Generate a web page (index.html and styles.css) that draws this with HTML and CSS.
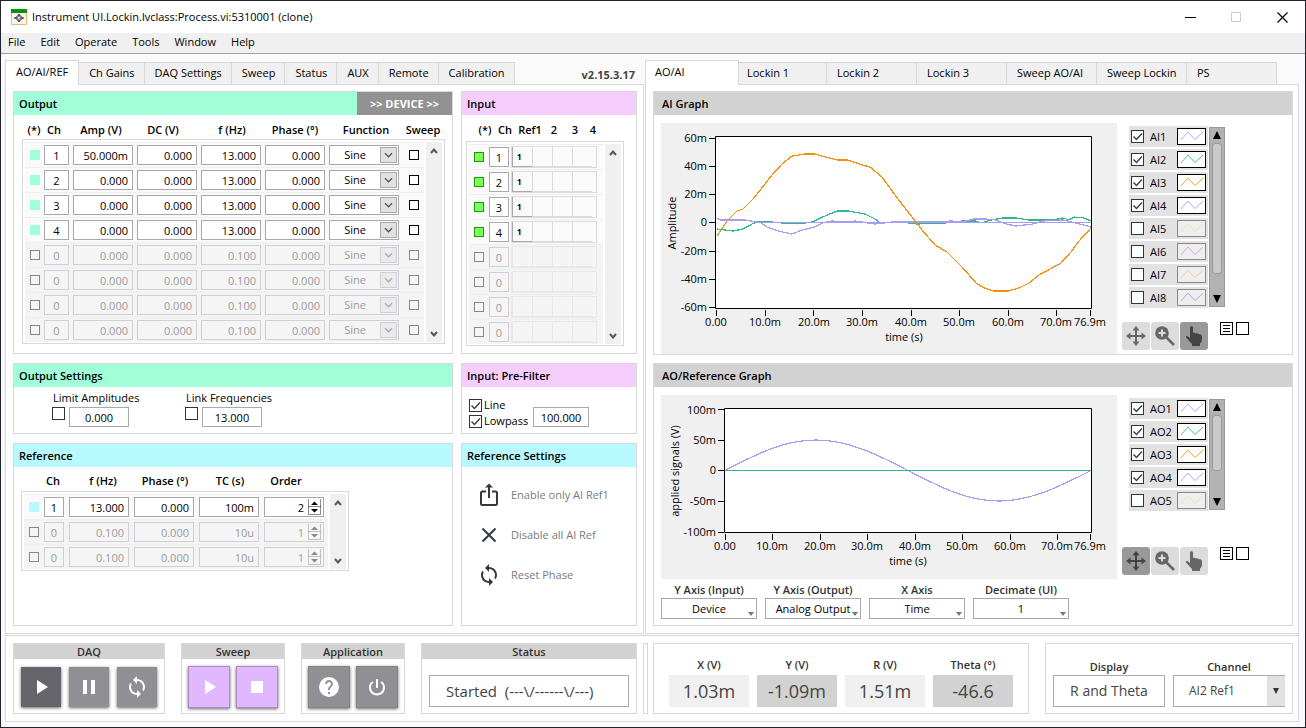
FILE: index.html
```html
<!DOCTYPE html>
<html lang="en">
<head>
<meta charset="utf-8">
<title>Instrument UI.Lockin.lvclass:Process.vi:5310001 (clone)</title>
<link rel="stylesheet" href="styles.css">
</head>
<body>
<svg class="defs" aria-hidden="true">
  <symbol id="chev-up" viewBox="0 0 8 8"><path d="M1 6 4 2.600 7 6" fill="none" stroke="currentColor" stroke-width="2"/></symbol>
  <symbol id="chev-down" viewBox="0 0 8 8"><path d="M1 2 4 5.400 7 2" fill="none" stroke="currentColor" stroke-width="2"/></symbol>
  <symbol id="chev-thin" viewBox="0 0 10 8"><path d="M1 1.500 5 5.500 9 1.500" fill="none" stroke="currentColor" stroke-width="1.500"/></symbol>
  <symbol id="tri-up" viewBox="0 0 8 8"><path d="M0 8 4 0 8 8Z" fill="currentColor"/></symbol>
  <symbol id="tri-down" viewBox="0 0 8 8"><path d="M0 0 4 8 8 0Z" fill="currentColor"/></symbol>
  <symbol id="spin" viewBox="0 0 13 16"><path d="M.5 0v15.500h12V0M0 7.500h13" fill="none" stroke="currentColor" opacity=".45"/><path d="M3 6 6.500 2.500 10 6ZM3 10 6.500 13.500 10 10Z" fill="currentColor"/></symbol>
  <symbol id="sync" viewBox="0 0 24 24"><path fill="currentColor" d="M12 4V1L8 5l4 4V6c3.310 0 6 2.690 6 6 0 1.010-.25 1.970-.7 2.800l1.460 1.460A7.930 7.930 0 0 0 20 12c0-4.420-3.580-8-8-8zm0 14c-3.310 0-6-2.690-6-6 0-1.010.25-1.970.7-2.800L5.240 7.740A7.930 7.930 0 0 0 4 12c0 4.420 3.580 8 8 8v3l4-4-4-4v3z"/></symbol>
  <symbol id="wave" viewBox="0 0 29 17"><path d="M2.500 12.500 10.500 3.500 18.500 12 27.500 3.500" fill="none" stroke="currentColor"/></symbol>
  <symbol id="move" viewBox="0 0 20 20"><path d="M10 2v16M2 10h16" stroke="currentColor" stroke-width="2"/><path d="M10 0 13.500 4.500h-7ZM10 20l3.500-4.500h-7ZM0 10l4.500-3.500v7ZM20 10l-4.500-3.500v7Z" fill="currentColor"/></symbol>
  <symbol id="zoomer" viewBox="0 0 20 20"><path d="M11.500 11.500 19 19" stroke="currentColor" stroke-width="2.500"/><circle cx="7" cy="7" r="6.800" fill="currentColor"/><path d="M7 3.500v7M3.500 7h7" stroke="#dcdcdc" stroke-width="2"/></symbol>
  <symbol id="hand" viewBox="0 0 18 20"><path fill="currentColor" d="M5 1.500Q5 0 6.500 0T8 1.500V7l1.500-.5 1.500 1 1.500-.3 1.500 1 1.500 0q1.500.8 1.500 2.300V14q0 2-2 3.500V20H7v-2L1 11.500Q.5 10 2 9.800L5 12Z"/></symbol>
</svg>

<div class="window">
  <header class="titlebar">
    <svg class="app-icon" viewBox="0 0 16 16"><path fill="#f4f4f4" stroke="#f0b860" d="M.5.5h15v15H.5z"/><path fill="#0b910b" d="M0 0h16v4H0z"/><path d="M3 9h10M8 5v8M4.500 9 8 5.500 11.500 9 8 12.500Z" fill="none" stroke="#222"/><circle cx="8" cy="9" r="1" fill="#f4f4f4"/></svg>
    <h1>Instrument UI.Lockin.lvclass:Process.vi:5310001 (clone)</h1>
    <button class="win-btn" aria-label="Minimize"><svg viewBox="0 0 11 11"><path d="M0 5.500h11" stroke="#000"/></svg></button>
    <button class="win-btn" aria-label="Maximize" disabled><svg viewBox="0 0 11 11"><path d="M.5.5h9v9h-9z" fill="none" stroke="#ccc"/></svg></button>
    <button class="win-btn" aria-label="Close"><svg viewBox="0 0 11 11"><path d="M.5.5l10 10M10.500.5l-10 10" stroke="#000" stroke-width="1.200"/></svg></button>
  </header>
  <nav class="menubar">
    <button>File</button><button>Edit</button><button>Operate</button><button>Tools</button><button>Window</button><button>Help</button>
  </nav>

  <main class="content">
    <div class="panes">
      <section class="pane">
        <div class="tabs">
          <button class="tab active">AO/AI/REF</button><button class="tab">Ch Gains</button><button class="tab">DAQ Settings</button><button class="tab">Sweep</button><button class="tab">Status</button><button class="tab">AUX</button><button class="tab">Remote</button><button class="tab">Calibration</button>
          <span class="version">v2.15.3.17</span>
        </div>
        <div class="panel left-grid">
          <section class="card">
            <div class="card-head mint"><h2>Output</h2><button class="device">&gt;&gt; DEVICE &gt;&gt;</button></div>
            <div class="list output-list">
              <table>
                <thead><tr><th>(*)</th><th>Ch</th><th>Amp (V)</th><th>DC (V)</th><th>f (Hz)</th><th>Phase (°)</th><th>Function</th><th>Sweep</th></tr></thead>
                <tbody>
                  <tr><td><input type="checkbox" class="led" aria-label="Active" checked></td><td><input class="mid" aria-label="Channel" value="1"></td><td><input aria-label="Amplitude" value="50.000m"></td><td><input aria-label="DC" value="0.000"></td><td><input aria-label="Frequency" value="13.000"></td><td><input aria-label="Phase" value="0.000"></td><td><span class="drop"><select aria-label="Function"><option>Sine</option></select><svg><use href="#chev-thin"/></svg></span></td><td><input type="checkbox" aria-label="Sweep"></td></tr>
                  <tr><td><input type="checkbox" class="led" aria-label="Active" checked></td><td><input class="mid" aria-label="Channel" value="2"></td><td><input aria-label="Amplitude" value="0.000"></td><td><input aria-label="DC" value="0.000"></td><td><input aria-label="Frequency" value="13.000"></td><td><input aria-label="Phase" value="0.000"></td><td><span class="drop"><select aria-label="Function"><option>Sine</option></select><svg><use href="#chev-thin"/></svg></span></td><td><input type="checkbox" aria-label="Sweep"></td></tr>
                  <tr><td><input type="checkbox" class="led" aria-label="Active" checked></td><td><input class="mid" aria-label="Channel" value="3"></td><td><input aria-label="Amplitude" value="0.000"></td><td><input aria-label="DC" value="0.000"></td><td><input aria-label="Frequency" value="13.000"></td><td><input aria-label="Phase" value="0.000"></td><td><span class="drop"><select aria-label="Function"><option>Sine</option></select><svg><use href="#chev-thin"/></svg></span></td><td><input type="checkbox" aria-label="Sweep"></td></tr>
                  <tr><td><input type="checkbox" class="led" aria-label="Active" checked></td><td><input class="mid" aria-label="Channel" value="4"></td><td><input aria-label="Amplitude" value="0.000"></td><td><input aria-label="DC" value="0.000"></td><td><input aria-label="Frequency" value="13.000"></td><td><input aria-label="Phase" value="0.000"></td><td><span class="drop"><select aria-label="Function"><option>Sine</option></select><svg><use href="#chev-thin"/></svg></span></td><td><input type="checkbox" aria-label="Sweep"></td></tr>
                  <tr class="off"><td><input type="checkbox" aria-label="Active" disabled></td><td><input class="mid" aria-label="Channel" value="0" disabled></td><td><input aria-label="Amplitude" value="0.000" disabled></td><td><input aria-label="DC" value="0.000" disabled></td><td><input aria-label="Frequency" value="0.100" disabled></td><td><input aria-label="Phase" value="0.000" disabled></td><td><span class="drop"><select aria-label="Function" disabled><option>Sine</option></select><svg><use href="#chev-thin"/></svg></span></td><td><input type="checkbox" aria-label="Sweep" disabled></td></tr>
                  <tr class="off"><td><input type="checkbox" aria-label="Active" disabled></td><td><input class="mid" aria-label="Channel" value="0" disabled></td><td><input aria-label="Amplitude" value="0.000" disabled></td><td><input aria-label="DC" value="0.000" disabled></td><td><input aria-label="Frequency" value="0.100" disabled></td><td><input aria-label="Phase" value="0.000" disabled></td><td><span class="drop"><select aria-label="Function" disabled><option>Sine</option></select><svg><use href="#chev-thin"/></svg></span></td><td><input type="checkbox" aria-label="Sweep" disabled></td></tr>
                  <tr class="off"><td><input type="checkbox" aria-label="Active" disabled></td><td><input class="mid" aria-label="Channel" value="0" disabled></td><td><input aria-label="Amplitude" value="0.000" disabled></td><td><input aria-label="DC" value="0.000" disabled></td><td><input aria-label="Frequency" value="0.100" disabled></td><td><input aria-label="Phase" value="0.000" disabled></td><td><span class="drop"><select aria-label="Function" disabled><option>Sine</option></select><svg><use href="#chev-thin"/></svg></span></td><td><input type="checkbox" aria-label="Sweep" disabled></td></tr>
                  <tr class="off"><td><input type="checkbox" aria-label="Active" disabled></td><td><input class="mid" aria-label="Channel" value="0" disabled></td><td><input aria-label="Amplitude" value="0.000" disabled></td><td><input aria-label="DC" value="0.000" disabled></td><td><input aria-label="Frequency" value="0.100" disabled></td><td><input aria-label="Phase" value="0.000" disabled></td><td><span class="drop"><select aria-label="Function" disabled><option>Sine</option></select><svg><use href="#chev-thin"/></svg></span></td><td><input type="checkbox" aria-label="Sweep" disabled></td></tr>
                </tbody>
              </table>
              <div class="scroll"><svg><use href="#chev-up"/></svg><svg><use href="#chev-down"/></svg></div>
            </div>
          </section>

          <section class="card">
            <div class="card-head pink"><h2>Input</h2></div>
            <div class="list input-list">
              <table>
                <thead><tr><th>(*)</th><th>Ch</th><th>Ref1</th><th>2</th><th>3</th><th>4</th></tr></thead>
                <tbody>
                  <tr><td><input type="checkbox" class="green" aria-label="Active" checked></td><td><input class="mid" aria-label="Channel" value="1"></td><td class="refs"><b>1</b><i></i><i></i><i></i></td></tr>
                  <tr><td><input type="checkbox" class="green" aria-label="Active" checked></td><td><input class="mid" aria-label="Channel" value="2"></td><td class="refs"><b>1</b><i></i><i></i><i></i></td></tr>
                  <tr><td><input type="checkbox" class="green" aria-label="Active" checked></td><td><input class="mid" aria-label="Channel" value="3"></td><td class="refs"><b>1</b><i></i><i></i><i></i></td></tr>
                  <tr><td><input type="checkbox" class="green" aria-label="Active" checked></td><td><input class="mid" aria-label="Channel" value="4"></td><td class="refs"><b>1</b><i></i><i></i><i></i></td></tr>
                  <tr class="off"><td><input type="checkbox" aria-label="Active" disabled></td><td><input class="mid" aria-label="Channel" value="0" disabled></td><td class="refs"><i></i><i></i><i></i><i></i></td></tr>
                  <tr class="off"><td><input type="checkbox" aria-label="Active" disabled></td><td><input class="mid" aria-label="Channel" value="0" disabled></td><td class="refs"><i></i><i></i><i></i><i></i></td></tr>
                  <tr class="off"><td><input type="checkbox" aria-label="Active" disabled></td><td><input class="mid" aria-label="Channel" value="0" disabled></td><td class="refs"><i></i><i></i><i></i><i></i></td></tr>
                  <tr class="off"><td><input type="checkbox" aria-label="Active" disabled></td><td><input class="mid" aria-label="Channel" value="0" disabled></td><td class="refs"><i></i><i></i><i></i><i></i></td></tr>
                </tbody>
              </table>
              <div class="scroll"><svg><use href="#chev-up"/></svg><svg><use href="#chev-down"/></svg></div>
            </div>
          </section>

          <section class="card">
            <div class="card-head mint"><h2>Output Settings</h2></div>
            <div class="limits">
              <div class="limit"><label for="limit-amp">Limit Amplitudes</label><div><input type="checkbox" class="big" id="limit-amp"><input class="mid" aria-label="Amplitude limit" value="0.000"></div></div>
              <div class="limit"><label for="link-freq">Link Frequencies</label><div><input type="checkbox" class="big" id="link-freq"><input class="mid" aria-label="Linked frequency" value="13.000"></div></div>
            </div>
          </section>

          <section class="card">
            <div class="card-head pink"><h2>Input: Pre-Filter</h2></div>
            <div class="filter">
              <div><label><input type="checkbox" class="big" checked>Line</label><label><input type="checkbox" class="big" checked>Lowpass</label></div>
              <input class="mid" aria-label="Lowpass frequency" value="100.000">
            </div>
          </section>

          <section class="card">
            <div class="card-head cyan"><h2>Reference</h2></div>
            <div class="list ref-list">
              <table>
                <thead><tr><th></th><th>Ch</th><th>f (Hz)</th><th>Phase (°)</th><th>TC (s)</th><th>Order</th></tr></thead>
                <tbody>
                  <tr><td><input type="checkbox" class="led" aria-label="Active" checked></td><td><input class="mid" aria-label="Channel" value="1"></td><td><input aria-label="Frequency" value="13.000"></td><td><input aria-label="Phase" value="0.000"></td><td><input aria-label="Time constant" value="100m"></td><td><span class="spinner"><input aria-label="Order" value="2"><svg><use href="#spin"/></svg></span></td></tr>
                  <tr class="off"><td><input type="checkbox" aria-label="Active" disabled></td><td><input class="mid" aria-label="Channel" value="0" disabled></td><td><input aria-label="Frequency" value="0.100" disabled></td><td><input aria-label="Phase" value="0.000" disabled></td><td><input aria-label="Time constant" value="10u" disabled></td><td><span class="spinner"><input aria-label="Order" value="1" disabled><svg><use href="#spin"/></svg></span></td></tr>
                  <tr class="off"><td><input type="checkbox" aria-label="Active" disabled></td><td><input class="mid" aria-label="Channel" value="0" disabled></td><td><input aria-label="Frequency" value="0.100" disabled></td><td><input aria-label="Phase" value="0.000" disabled></td><td><input aria-label="Time constant" value="10u" disabled></td><td><span class="spinner"><input aria-label="Order" value="1" disabled><svg><use href="#spin"/></svg></span></td></tr>
                </tbody>
              </table>
              <div class="scroll"><svg><use href="#chev-up"/></svg><svg><use href="#chev-down"/></svg></div>
            </div>
          </section>

          <section class="card">
            <div class="card-head cyan"><h2>Reference Settings</h2></div>
            <div class="actions">
              <button><svg viewBox="0 0 24 24"><path d="M9 8.500H5.500Q4 8.500 4 10V20.500Q4 22 5.500 22h13Q20 22 20 20.500V10q0-1.500-1.500-1.500H15" fill="none" stroke="currentColor" stroke-width="2"/><path d="M12 15V3" stroke="currentColor" stroke-width="2"/><path d="M8 4.500 12 .5l4 4Z" fill="currentColor"/></svg>Enable only AI Ref1</button>
              <button><svg viewBox="0 0 24 24"><path d="M5.500 5.500l13 13M18.500 5.500l-13 13" stroke="currentColor" stroke-width="2"/></svg>Disable all AI Ref</button>
              <button><svg viewBox="0 0 24 24"><use href="#sync"/></svg>Reset Phase</button>
            </div>
          </section>
        </div>
      </section>

      <section class="pane">
        <div class="tabs wide">
          <button class="tab active">AO/AI</button><button class="tab">Lockin 1</button><button class="tab">Lockin 2</button><button class="tab">Lockin 3</button><button class="tab">Sweep AO/AI</button><button class="tab">Sweep Lockin</button><button class="tab">PS</button>
        </div>
        <div class="panel right-grid">
          <section class="card">
            <div class="card-head gray"><h2>AI Graph</h2></div>
            <div class="graph-row">
              <svg class="graph" viewBox="0 0 456 231" role="img" aria-label="AI Graph">
                <path class="frame" d="M54.500 13.500h376v172h-376z"/>
                <path class="axis" d="M48 15.500h6M48 43.500h6M48 71.500h6M48 99.500h6M48 128.500h6M48 156.500h6M48 184.500h6M55.500 187v6M104.500 187v6M152.500 187v6M201.500 187v6M250.500 187v6M298.500 187v6M347.500 187v6M395.500 187v6M429.500 187v6"/>
                <g class="end"><text x="46" y="19">60m</text><text x="46" y="47">40m</text><text x="46" y="75">20m</text><text x="46" y="103">0</text><text x="46" y="132">-20m</text><text x="46" y="160">-40m</text><text x="46" y="188">-60m</text></g>
                <g class="mid-text"><text x="55" y="203">0.00</text><text x="104" y="203">10.0m</text><text x="153" y="203">20.0m</text><text x="201" y="203">30.0m</text><text x="250" y="203">40.0m</text><text x="298" y="203">50.0m</text><text x="347" y="203">60.0m</text><text x="395" y="203">70.0m</text><text x="429" y="203">76.9m</text><text x="243" y="218">time (s)</text><text transform="translate(15 100) rotate(-90)">Amplitude</text></g>
                <g class="trace">
                  <path stroke="#2eb889" d="M56 106 72 108 82 106 91 101 97 99H111L121 100H144L151 99 164 93 176 88H187L204 91 214 96 219 100 240 99 256 101 284 100 301 98 315 98 320 100 330 97 342 95H355L368 97H392L402 95 408 97 413 94 423 95 430 98"/>
                  <path stroke="#a89cf5" d="M56 95 59 97H84L99 99.500H430M99 99 106 104 117 108 131 111 141 107 154 104 161 100 171 98 184 99 194 98 214 101 231 99 270 99 291 98 301 99 313 96 325 96 335 97 345 101 355 103 372 101 382 98 402 97 415 100 430 104"/>
                  <path stroke="#f88c0c" d="M56 113 66 98 76 88 82 86 92 76 104 61 111 52 121 41 131 33 144 31H154L164 34 177 37H187L201 42 209 44 221 54 237 76 251 94 261 107 274 122 286 129 301 144 315 160 323 165 333 168H347L358 165 368 160 378 152 400 140 410 129 418 118 430 105"/>
                </g>
              </svg>
              <div class="side">
                <div class="legend">
                  <div class="series">
                    <label class="s1"><input type="checkbox" class="big" checked>AI1<svg><use href="#wave"/></svg></label>
                    <label class="s2"><input type="checkbox" class="big" checked>AI2<svg><use href="#wave"/></svg></label>
                    <label class="s3"><input type="checkbox" class="big" checked>AI3<svg><use href="#wave"/></svg></label>
                    <label class="s1"><input type="checkbox" class="big" checked>AI4<svg><use href="#wave"/></svg></label>
                    <label class="s5 dim"><input type="checkbox" class="big">AI5<svg><use href="#wave"/></svg></label>
                    <label class="s6 dim"><input type="checkbox" class="big">AI6<svg><use href="#wave"/></svg></label>
                    <label class="s7 dim"><input type="checkbox" class="big">AI7<svg><use href="#wave"/></svg></label>
                    <label class="s8 dim"><input type="checkbox" class="big">AI8<svg><use href="#wave"/></svg></label>
                  </div>
                  <div class="bar"><svg><use href="#tri-up"/></svg><span class="thumb thumb-long"></span><svg><use href="#tri-down"/></svg></div>
                </div>
                <div class="tools">
                  <button class="tool" aria-label="Pan"><svg><use href="#move"/></svg></button><button class="tool" aria-label="Zoom"><svg><use href="#zoomer"/></svg></button><button class="tool on" aria-label="Select"><svg><use href="#hand"/></svg></button>
                  <button class="mini" aria-label="List"><svg viewBox="0 0 11 11"><path d="M2 2.500h7M2 5.500h7M2 8.500h7" stroke="#000"/></svg></button><button class="mini" aria-label="Blank"></button>
                </div>
              </div>
            </div>
          </section>

          <section class="card">
            <div class="card-head gray"><h2>AO/Reference Graph</h2></div>
            <div class="graph-row">
              <svg class="graph" viewBox="0 0 456 184" role="img" aria-label="AO/Reference Graph">
                <path class="frame" d="M63.500 13.500h367v124h-367z"/>
                <path class="axis" d="M57 14.500h6M57 45.500h6M57 75.500h6M57 106.500h6M57 137.500h6M64.500 139v6M111.500 139v6M159.500 139v6M206.500 139v6M254.500 139v6M301.500 139v6M349.500 139v6M396.500 139v6M429.500 139v6"/>
                <g class="end"><text x="55" y="19">100m</text><text x="55" y="49">50m</text><text x="55" y="79">0</text><text x="55" y="110">-50m</text><text x="55" y="141">-100m</text></g>
                <g class="mid-text"><text x="64" y="155">0.00</text><text x="111" y="155">10.0m</text><text x="159" y="155">20.0m</text><text x="206" y="155">30.0m</text><text x="254" y="155">40.0m</text><text x="301" y="155">50.0m</text><text x="349" y="155">60.0m</text><text x="396" y="155">70.0m</text><text x="429" y="155">76.9m</text><text x="247" y="170">time (s)</text><text transform="translate(18 76) rotate(-90)">applied signals (V)</text></g>
                <g class="trace">
                  <path stroke="#a89cf5" d="M64 75.500C94 60 122 45 155 45S217 60 247 75.500 305 106 338 106 399 91 430 75.500"/>
                  <path stroke="#2eb889" d="M64 75.500H430"/>
                </g>
              </svg>
              <div class="side">
                <div class="legend">
                  <div class="series">
                    <label class="s1"><input type="checkbox" class="big" checked>AO1<svg><use href="#wave"/></svg></label>
                    <label class="s2"><input type="checkbox" class="big" checked>AO2<svg><use href="#wave"/></svg></label>
                    <label class="s3"><input type="checkbox" class="big" checked>AO3<svg><use href="#wave"/></svg></label>
                    <label class="s1"><input type="checkbox" class="big" checked>AO4<svg><use href="#wave"/></svg></label>
                    <label class="s5 dim"><input type="checkbox" class="big">AO5<svg><use href="#wave"/></svg></label>
                  </div>
                  <div class="bar"><svg><use href="#tri-up"/></svg><span class="thumb thumb-short"></span><svg><use href="#tri-down"/></svg></div>
                </div>
                <div class="tools">
                  <button class="tool on" aria-label="Pan"><svg><use href="#move"/></svg></button><button class="tool" aria-label="Zoom"><svg><use href="#zoomer"/></svg></button><button class="tool" aria-label="Select"><svg><use href="#hand"/></svg></button>
                  <button class="mini" aria-label="List"><svg viewBox="0 0 11 11"><path d="M2 2.500h7M2 5.500h7M2 8.500h7" stroke="#000"/></svg></button><button class="mini" aria-label="Blank"></button>
                </div>
              </div>
            </div>
            <div class="axes">
              <label>Y Axis (Input)<span class="ring"><select><option>Device</option></select><svg viewBox="0 0 6 4"><path d="M0 0h6L3 4Z"/></svg></span></label>
              <label>Y Axis (Output)<span class="ring"><select><option>Analog Output</option></select><svg viewBox="0 0 6 4"><path d="M0 0h6L3 4Z"/></svg></span></label>
              <label>X Axis<span class="ring"><select><option>Time</option></select><svg viewBox="0 0 6 4"><path d="M0 0h6L3 4Z"/></svg></span></label>
              <label>Decimate (UI)<span class="ring"><select><option>1</option></select><svg viewBox="0 0 6 4"><path d="M0 0h6L3 4Z"/></svg></span></label>
            </div>
          </section>
        </div>
      </section>
    </div>

    <footer class="panel footer">
      <div class="foot-left">
        <section class="group"><h3>DAQ</h3><div class="keys loose">
          <button class="key dark" aria-label="Run"><svg viewBox="0 0 24 24"><path d="M8 5v14l11-7z"/></svg></button>
          <button class="key" aria-label="Pause"><svg viewBox="0 0 24 24"><path d="M6 5h4v14H6zM14 5h4v14h-4z"/></svg></button>
          <button class="key" aria-label="Restart"><svg viewBox="0 0 24 24"><use href="#sync"/></svg></button>
        </div></section>
        <section class="group"><h3>Sweep</h3><div class="keys">
          <button class="key lilac" aria-label="Start sweep"><svg viewBox="0 0 24 24"><path d="M8 5v14l11-7z"/></svg></button>
          <button class="key lilac" aria-label="Stop sweep"><svg viewBox="0 0 24 24"><path d="M6 6h12v12H6z"/></svg></button>
        </div></section>
        <section class="group"><h3>Application</h3><div class="keys">
          <button class="key framed" aria-label="Help"><svg viewBox="0 0 24 24"><path d="M12 2a10 10 0 1 0 0 20 10 10 0 0 0 0-20zm1 17h-2v-2h2v2zm2.070-7.750-.9.920C13.450 12.900 13 13.500 13 15h-2v-.5c0-1.100.45-2.100 1.170-2.830l1.240-1.260c.37-.36.59-.86.59-1.410 0-1.100-.9-2-2-2s-2 .9-2 2H8c0-2.210 1.790-4 4-4s4 1.790 4 4c0 .88-.36 1.680-.93 2.250z"/></svg></button>
          <button class="key framed" aria-label="Power"><svg viewBox="0 0 24 24"><path d="M13 4h-2v9h2V4zm3.800 2.200-1.300 1.300A5.900 5.900 0 0 1 18 12.500a6 6 0 1 1-9.500-5L7.200 6.200A8 8 0 1 0 20 12.500a7.900 7.900 0 0 0-3.200-6.300z"/></svg></button>
        </div></section>
        <section class="group status"><h3>Status</h3><output>Started&nbsp; (---\/------\/---)</output></section>
      </div>
      <div class="split"></div>
      <section class="group readouts">
        <div><h3>X (V)</h3><output>1.03m</output></div>
        <div><h3>Y (V)</h3><output class="shade">-1.09m</output></div>
        <div><h3>R (V)</h3><output>1.51m</output></div>
        <div><h3>Theta (°)</h3><output class="shade">-46.6</output></div>
      </section>
      <section class="group display">
        <div><h3>Display</h3><button class="mode">R and Theta</button></div>
        <label>Channel<span class="combo"><select><option>AI2 Ref1</option></select><svg><use href="#tri-down"/></svg></span></label>
      </section>
    </footer>
  </main>
</div>
</body>
</html>
```
FILE: styles.css
```css
* { box-sizing: border-box; }
body, h1, h2, h3 { margin: 0; }
body, button, input, select {
  font: 11px/14px "Open Sans", "Noto Sans", sans-serif;
  color: #000;
}
h1 { font-size: 11px; font-weight: 400; }
h2, h3 { font-size: 11px; font-weight: 600; }
button { padding: 0; border: 0; background: none; }
svg { display: block; }
.defs { display: none; }

.window {
  display: flex;
  flex-direction: column;
  min-height: 100vh;
  border: 1px solid #1f2430;
  background: #fafafa;
}
.titlebar {
  display: flex;
  align-items: center;
  height: 32px;
  padding-left: 10px;
  background: #fff;
}
.titlebar h1 { flex: 1; padding-left: 5px; }
.app-icon { width: 16px; height: 16px; }
.win-btn { display: grid; place-items: center; width: 46px; height: 30px; }
.win-btn svg { width: 11px; height: 11px; }
.menubar {
  display: flex;
  gap: 15px;
  height: 21px;
  padding: 0 7px 3px;
  background: #f0f0f0;
  border-bottom: 1px solid #a0a0a0;
}

.content {
  flex: 1;
  display: flex;
  flex-direction: column;
  gap: 1px;
  padding: 6px 6px 5px 4px;
}
.panes { flex: 1; display: grid; grid-template-columns: 639px 1fr; gap: 1px; }
.pane { display: flex; flex-direction: column; min-width: 0; }
.panel { border: 1px solid #d8d8d8; background: #fff; }
.tabs { display: flex; align-items: flex-end; height: 24px; }
.tab {
  height: 22px;
  padding: 0 9px 2px 10px;
  border: solid #d8d8d8;
  border-width: 1px 1px 0 0;
  background: #f0f0f0;
  white-space: nowrap;
}
.tab.active {
  height: 25px;
  margin-bottom: -1px;
  padding-right: 10px;
  padding-bottom: 3px;
  border-left-width: 1px;
  background: #fff;
  z-index: 1;
}
.version { flex: 1; padding: 0 9px 2px 0; text-align: right; font-weight: 700; color: #444; }
.wide .tab { width: 90px; text-align: left; }
.wide .active { width: 94px; margin-right: -2px; padding-left: 9px; }

.left-grid {
  flex: 1;
  display: grid;
  grid-template-columns: 440px 1fr;
  grid-template-rows: auto auto 1fr;
  gap: 9px 8px;
  padding: 6px 6px 7px 7px;
}
.right-grid {
  flex: 1;
  display: grid;
  grid-template-rows: auto 1fr;
  gap: 8px;
  padding: 6px 5px 7px 7px;
}
.card { border: 1px solid #d8d8d8; background: #fff; min-width: 0; }
.card-head { display: flex; align-items: center; height: 23px; padding-left: 5px; }
.card-head h2 { flex: 1; }
.mint { background: #a0fed9; }
.pink { background: #f5cefe; }
.cyan { background: #b8f9ff; }
.gray { background: #d2d2d2; padding-left: 8px; }
.device { width: 95px; height: 23px; background: #929292; color: #fff; font-weight: 700; }

input {
  display: block;
  width: 100%;
  min-width: 0;
  height: 20px;
  padding: 0 4px;
  border: 1px solid #a8a8ae;
  border-radius: 0;
  background: #fff;
  text-align: right;
}
input.mid { padding: 0; text-align: center; }
input:disabled { border-color: #d0d0d4; background: #f5f5f5; color: #9b9b9b; }
input[type="checkbox"] {
  appearance: none;
  flex: none;
  width: 10px;
  height: 10px;
  margin: 0;
  padding: 0;
  border-color: #000;
}
input[type="checkbox"]:disabled { border-color: #888; }
input[type="checkbox"].big { width: 13px; height: 13px; border-color: #333; }
input.big:checked {
  background: #fff url("data:image/svg+xml,%3Csvg xmlns='http://www.w3.org/2000/svg' viewBox='0 0 11 11'%3E%3Cpath d='M1.500 5.500 4.500 8.500 10 2.500' fill='none' stroke='%23444' stroke-width='1.500'/%3E%3C/svg%3E") center / 11px 11px no-repeat;
}
input[type="checkbox"].led { border: 0; background: #a0fed9; }
.ref-list input[type="checkbox"].led { background: #b8f9ff; }
input[type="checkbox"].green { border-color: #1a9a10; background: #7dff5a; }
select {
  appearance: none;
  width: 100%;
  height: 20px;
  padding: 0;
  border: 1px solid #a8a8ae;
  border-radius: 0;
  background: #fff;
  text-align: center;
  text-align-last: center;
}
select:disabled { border-color: #d0d0d4; background: #f5f5f5; color: #9b9b9b; opacity: 1; }

/* channel lists */
.list { display: grid; grid-template-columns: 1fr 19px; }
.list table { display: block; grid-area: 1 / 1 / 2 / 3; }
.list thead { display: block; height: 24px; }
.list tbody { display: block; padding: 2px 2px 1px; border: 1px solid #d8d8d8; }
.list tr { display: grid; align-items: center; }
.list tbody tr { height: 25px; margin-right: 18px; border-top: 1px solid #efefef; background: #fafafa; }
.list tbody tr.off { background: #f4f4f4; }
.list th { padding: 0; font-weight: 600; white-space: nowrap; display: flex; justify-content: center; }
.list td { padding: 0; min-width: 0; }
.scroll {
  grid-area: 1 / 2;
  display: flex;
  flex-direction: column;
  justify-content: space-between;
  align-items: center;
  width: 16px;
  margin: 27px 0 2px;
  padding: 5px 0 4px;
  background: #f0f0f0;
  color: #555;
}
.scroll svg { width: 8px; height: 8px; }

.output-list { padding: 0 7px 9px 8px; }
.output-list tr { grid-template-columns: 10px 25px repeat(4, 60px) 70px 16px; gap: 4px; padding-left: 5px; }
.output-list thead tr { grid-template-columns: 10px 22px 64px 52px 78px 40px 94px 12px; padding: 8px 0 0 7px; }
.output-list td:last-child input { margin-left: 6px; }

.input-list { padding: 0 12px 7px 4px; }
.input-list thead { height: 26px; }
.input-list .scroll { margin-top: 29px; }
.input-list tr { column-gap: 2px; padding-left: 5px; }
.input-list tbody tr { grid-template-columns: 13px 20px 86px; }
.input-list thead tr { grid-template-columns: 14px 22px 24px 20px 18px 14px; padding: 8px 0 0 12px; }
.refs { display: flex; height: 22px; padding: 2px; border: 1px solid #dcdcdc; }
.refs b, .refs i { width: 20px; border: solid #dcdcdc; border-width: 0 0 1px 1px; }
.refs b { border-color: #a8a8ae; font: 700 8px/10px "Open Sans", sans-serif; padding: 5px 0 0 4px; }
.off .refs, .off .refs i { border-color: #e8e8e8; }

.ref-list { width: 335px; padding-left: 7px; }
.ref-list tr { grid-template-columns: 10px 20px repeat(4, 60px); gap: 5px; padding-left: 5px; }
.ref-list thead tr { grid-template-columns: 10px 20px 70px 44px 76px 26px; padding: 7px 0 0 7px; }

.drop, .spinner, .ring, .combo { display: grid; align-items: center; }
.drop > *, .spinner > *, .ring > *, .combo > * { grid-area: 1 / 1; }
.drop select { padding-right: 18px; }
.drop svg {
  justify-self: end;
  width: 17px;
  height: 16px;
  margin-right: 2px;
  padding: 4px 3px 3px;
  border: 1px solid #a8a8ae;
  background: #e1e1e1;
  color: #555;
  pointer-events: none;
}
.off .drop svg { border-color: #d0d0d4; background: #ebebeb; color: #aaa; }
.spinner input { padding-right: 19px; }
.spinner svg { justify-self: end; width: 13px; height: 16px; margin-right: 3px; }
.off .spinner svg { color: #888; }

.limits { display: flex; gap: 47px; padding: 4px 0 6px 38px; }
.limit { width: 86px; }
.limit label { display: block; white-space: nowrap; padding-left: 1px; }
.limit div { display: flex; gap: 4px; padding-top: 2px; }
.limit .mid { width: 60px; }
.filter { display: flex; gap: 4px; align-items: flex-end; padding: 10px 0 4px 7px; }
.filter label { display: flex; align-items: center; gap: 2px; width: 60px; height: 16px; }
.filter .mid { width: 56px; margin-bottom: 2px; }
.actions { display: flex; flex-direction: column; gap: 16px; padding: 16px 0 0 15px; }
.actions button { display: flex; align-items: center; gap: 10px; color: #7a7a7a; }
.actions svg { width: 24px; height: 24px; color: #333740; }

/* graphs */
.graph-row { display: flex; gap: 5px; padding: 8px 0 0 7px; }
.graph { flex: 0 1 456px; min-width: 0; align-self: flex-start; background: #f0f0f0; }
.graph text { font-size: 11px; }
.end { text-anchor: end; }
.mid-text { text-anchor: middle; }
.frame { fill: #fff; stroke: #000; }
.axis { stroke: #000; }
.trace { fill: none; stroke-width: 1.25; shape-rendering: crispEdges; }
.side { display: flex; flex-direction: column; justify-content: space-between; padding: 3px 0 4px; }
.legend { display: flex; gap: 1px; padding-left: 7px; }
.series { display: grid; gap: 2px; }
.series label {
  display: grid;
  grid-template-columns: 13px 21px 29px;
  gap: 6px;
  align-items: center;
  width: 79px;
  height: 21px;
  padding: 0 2px;
  background: #e2e2e2;
}
.series svg { width: 29px; height: 17px; border: 1px solid #000; background: #fff; }
.s1 { --line: #a89cf5; }
.s2 { --line: #2eb889; }
.s3 { --line: #f88c0c; }
.s5 { --line: #dce8a8; }
.s6 { --line: #d0a0e8; }
.s7 { --line: #edc98a; }
.s8 { --line: #a0a0e8; }
.series use { color: var(--line); }
.dim svg { border-color: #888; background: #eee; }
.bar {
  display: flex;
  flex-direction: column;
  align-items: center;
  width: 16px;
  margin: 1px 0;
  padding: 3px 0;
  border: 1px solid #999;
  background: #b2b2b2;
}
.bar svg { width: 8px; height: 8px; }
.thumb { width: 10px; margin: 4px 0 auto; border: 1px solid #999; border-radius: 3px; background: #cacaca; }
.thumb-long { flex: 0 0 76%; }
.thumb-short { flex: 0 0 54%; }
.tools { display: flex; gap: 1px; }
.tool { display: grid; place-items: center; width: 28px; height: 28px; border-radius: 3px; background: #dcdcdc; color: #666; }
.tool.on { background: #999; color: #444; }
.tool svg { width: 20px; height: 20px; }
.mini { width: 13px; height: 13px; border: 1px solid #000; background: #fff; }
.mini + .mini { margin-left: 2px; }
.tool + .mini { margin-left: 11px; }
.axes { display: flex; gap: 8px; padding: 4px 0 6px 7px; }
.axes label { width: 96px; text-align: center; font-weight: 600; color: #333; white-space: nowrap; }
.ring { margin-top: 1px; }
.ring select { height: 21px; }
.ring svg { place-self: end; width: 8px; height: 4px; margin: 0 2px 3px; fill: #777; pointer-events: none; }

/* bottom strip */
.footer { display: flex; padding: 7px 5px 7px 7px; }
.foot-left { display: flex; gap: 16px; width: 624px; }
.group { border: 1px solid #d8d8d8; }
.group h3 { text-align: center; color: #333; }
.foot-left h3 { height: 15px; background: #d2d2d2; line-height: 15px; }
.keys { display: flex; gap: 6px; padding: 7px 6px 5px; }
.loose { gap: 8px; padding: 8px 7px 6px; }
.key { display: grid; place-items: center; width: 42px; height: 42px; background: #8f8f94; box-shadow: 0 1px 3px #0009; }
.loose .key { width: 40px; height: 40px; }
.key svg { width: 24px; height: 24px; fill: #fff; color: #fff; }
.key.dark { background: #66656b; }
.key.lilac { border: 1px solid #a98cc0; background: #e1b8ff; }
.key.framed { border: 1px solid #858585; }
.status { flex: 1; }
.status output {
  display: block;
  height: 32px;
  margin: 16px 7px 6px;
  padding-left: 16px;
  border: 1px solid #aaa;
  font-size: 15px;
  line-height: 30px;
  color: #444;
  white-space: nowrap;
}
.split { width: 5px; margin: 0 5px 0 6px; border: 1px solid #d8d8d8; }
.readouts { display: flex; gap: 8px; padding: 14px 15px 6px; }
.readouts output { display: block; width: 80px; height: 32px; margin-top: 3px; background: #f0f0f0; font-size: 18px; line-height: 32px; text-align: center; color: #444; }
.readouts .shade { background: #d2d2d2; }
.display { display: flex; gap: 8px; margin-left: auto; padding: 16px 7px 6px; }
.display label { width: 112px; text-align: center; font-weight: 600; color: #333; }
.mode { display: block; width: 112px; height: 32px; margin-top: 1px; border: 1px solid #aaa; background: #fff; font-size: 14px; color: #444; }
.combo { margin-top: 1px; }
.combo select { height: 32px; padding-right: 34px; border-color: #aaa; font-size: 12px; color: #444; }
.combo svg { justify-self: end; width: 18px; height: 30px; padding: 11px 6px; background: #e1e1e1; color: #333; pointer-events: none; }
```
